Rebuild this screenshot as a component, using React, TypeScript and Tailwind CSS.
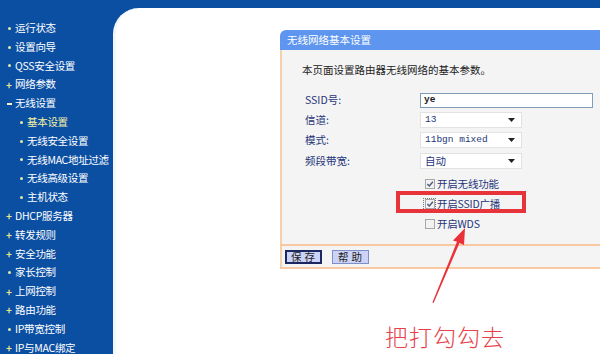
type MenuItem = { label: string; mark: "dot" | "plus" | "minus"; sub?: boolean; active?: boolean };

const menu: MenuItem[] = [
  { label: "运行状态", mark: "dot" },
  { label: "设置向导", mark: "dot" },
  { label: "QSS安全设置", mark: "dot" },
  { label: "网络参数", mark: "plus" },
  { label: "无线设置", mark: "minus" },
  { label: "基本设置", mark: "dot", sub: true, active: true },
  { label: "无线安全设置", mark: "dot", sub: true },
  { label: "无线MAC地址过滤", mark: "dot", sub: true },
  { label: "无线高级设置", mark: "dot", sub: true },
  { label: "主机状态", mark: "dot", sub: true },
  { label: "DHCP服务器", mark: "plus" },
  { label: "转发规则", mark: "plus" },
  { label: "安全功能", mark: "plus" },
  { label: "家长控制", mark: "dot" },
  { label: "上网控制", mark: "plus" },
  { label: "路由功能", mark: "plus" },
  { label: "IP带宽控制", mark: "dot" },
  { label: "IP与MAC绑定", mark: "plus" },
];

function Mark({ mark }: { mark: MenuItem["mark"] }) {
  if (mark === "dot") return <span className="block w-[3px] h-[3px] rounded-full bg-[#e3e9a6]" />;
  if (mark === "minus") return <span className="block w-[5px] h-[2px] bg-[#f1f3c0]" />;
  return <span className="text-[#eae48a] font-bold text-[10px] leading-none">+</span>;
}

function Sidebar() {
  return (
    <nav className="w-[113px] shrink-0 pt-[19px] text-white text-[10.5px] leading-[18.8px]">
      {menu.map((m) => (
        <div key={m.label} className={`flex items-center h-[18.8px] ${m.sub ? "pl-[18px]" : "pl-[6px]"}`}>
          <span className="w-[6px] flex justify-center mr-[3px]">
            <Mark mark={m.mark} />
          </span>
          <span className={`whitespace-nowrap tracking-[-0.3px] ${m.active ? "text-[#f4f0a4]" : ""}`}>{m.label}</span>
        </div>
      ))}
    </nav>
  );
}

function Select({ value, mono }: { value: string; mono?: boolean }) {
  return (
    <div className="w-[102px] h-[16px] bg-white border border-[#e2e2e2] flex items-center justify-between pl-[4px] pr-[6px]">
      <span className={mono ? "font-['Liberation_Mono',monospace] text-[9.5px]" : "text-[10.5px]"}>{value}</span>
      <svg width="7" height="4" viewBox="0 0 7 4">
        <path d="M0 0h7L3.5 4z" fill="#222" />
      </svg>
    </div>
  );
}

function Check({ checked, focus, label }: { checked: boolean; focus?: boolean; label: string }) {
  return (
    <div className="h-[20px] flex items-center pl-[5px]">
      <span className={`flex items-center justify-center w-[13px] h-[13px] -ml-[2px] ${focus ? "border border-dotted border-[#777]" : "border border-transparent"}`}>
        <svg width="10" height="10" viewBox="0 0 10 10">
          <rect x="0.5" y="0.5" width="9" height="9" fill="#f2f2f2" stroke="#a7a7a7" />
          {checked && <path d="M2.3 5l2 2 3.6-4.2" fill="none" stroke="#4a5a7a" strokeWidth="1.4" />}
        </svg>
      </span>
      <span className="ml-[1px] text-[#1f3579] tracking-[-0.2px]">{label}</span>
    </div>
  );
}

function Panel() {
  return (
    <section className="w-[320px] ml-[167px] mt-[22px] text-[10.5px] text-[#1f3579]">
      <div className="h-[20px] bg-[#5d95ef] rounded-tl-[6px] pl-[7px] leading-[20px] text-white">无线网络基本设置</div>
      <div className="bg-[#f4f4f4] border-l-2 border-[#f6d0a8] pt-[10px] pb-[10px]">
        <p className="h-[20px] leading-[20px] pl-[20px] text-[#222]">本页面设置路由器无线网络的基本参数。</p>
        <div className="mt-[12px] flex flex-col gap-[4px]">
          <div className="h-[16px] flex items-center">
            <span className="w-[138px] pl-[23px]">SSID号:</span>
            <div className="w-[173px] h-[15px] bg-white border border-[#7f9db9] flex items-center pl-[3px] font-['Liberation_Mono',monospace] font-bold text-[9.5px] text-[#222]">
              ye
            </div>
          </div>
          <div className="h-[16px] flex items-center">
            <span className="w-[138px] pl-[23px]">信道:</span>
            <Select value="13" mono />
          </div>
          <div className="h-[16px] flex items-center">
            <span className="w-[138px] pl-[23px]">模式:</span>
            <Select value="11bgn mixed" mono />
          </div>
          <div className="h-[16px] flex items-center mt-[1px]">
            <span className="w-[138px] pl-[23px]">频段带宽:</span>
            <Select value="自动" />
          </div>
        </div>
        <div className="mt-[5px] pl-[138px] flex flex-col">
          <Check checked label="开启无线功能" />
          <Check checked focus label="开启SSID广播" />
          <Check checked={false} label="开启WDS" />
        </div>
      </div>
      <div className="h-[2px] bg-[#f8c8a0]" />
      <div className="bg-[#f4f4f4] border-l-2 border-[#f6d0a8] h-[21px] pt-[4px] pl-[3px] flex gap-[10px] text-[#222]">
        <button className="w-[37px] h-[14px] bg-[#ccd3f6] border-2 border-[#1d2860] leading-[10px] tracking-[3px] pl-[2px]">保存</button>
        <button className="w-[37px] h-[14px] bg-[#ccd3f6] border border-[#7e90cc] leading-[12px] tracking-[3px] pl-[2px]">帮助</button>
      </div>
      <div className="h-[2px] bg-[#f8c8a0]" />
    </section>
  );
}

export default function App() {
  return (
    <div className="relative w-[600px] h-[354px] overflow-hidden bg-[#0b4fa3] flex font-['Noto_Sans_CJK_SC',sans-serif]">
      <Sidebar />
      <main className="flex-1 mt-[8px] bg-white rounded-tl-[26px] border-l-[3px] border-[#f3f7fc]">
        <div className="-ml-[3px]">
          <Panel />
        </div>
      </main>

      <div className="absolute left-[396px] top-[191px] w-[130px] h-[22px] border-4 border-[#e7343b]" />
      <svg className="absolute inset-0 pointer-events-none" width="600" height="354" viewBox="0 0 600 354">
        <path d="M465 228 L464 245 L459.5 243 L433.6 303 L432.4 302.6 L457 241.8 L453 240.5 Z" fill="#ea3039" />
      </svg>
      <p className="absolute left-[385px] top-[324px] text-[23px] leading-[24px] font-light text-[#e8404a] tracking-[1px]">把打勾勾去</p>
    </div>
  );
}
